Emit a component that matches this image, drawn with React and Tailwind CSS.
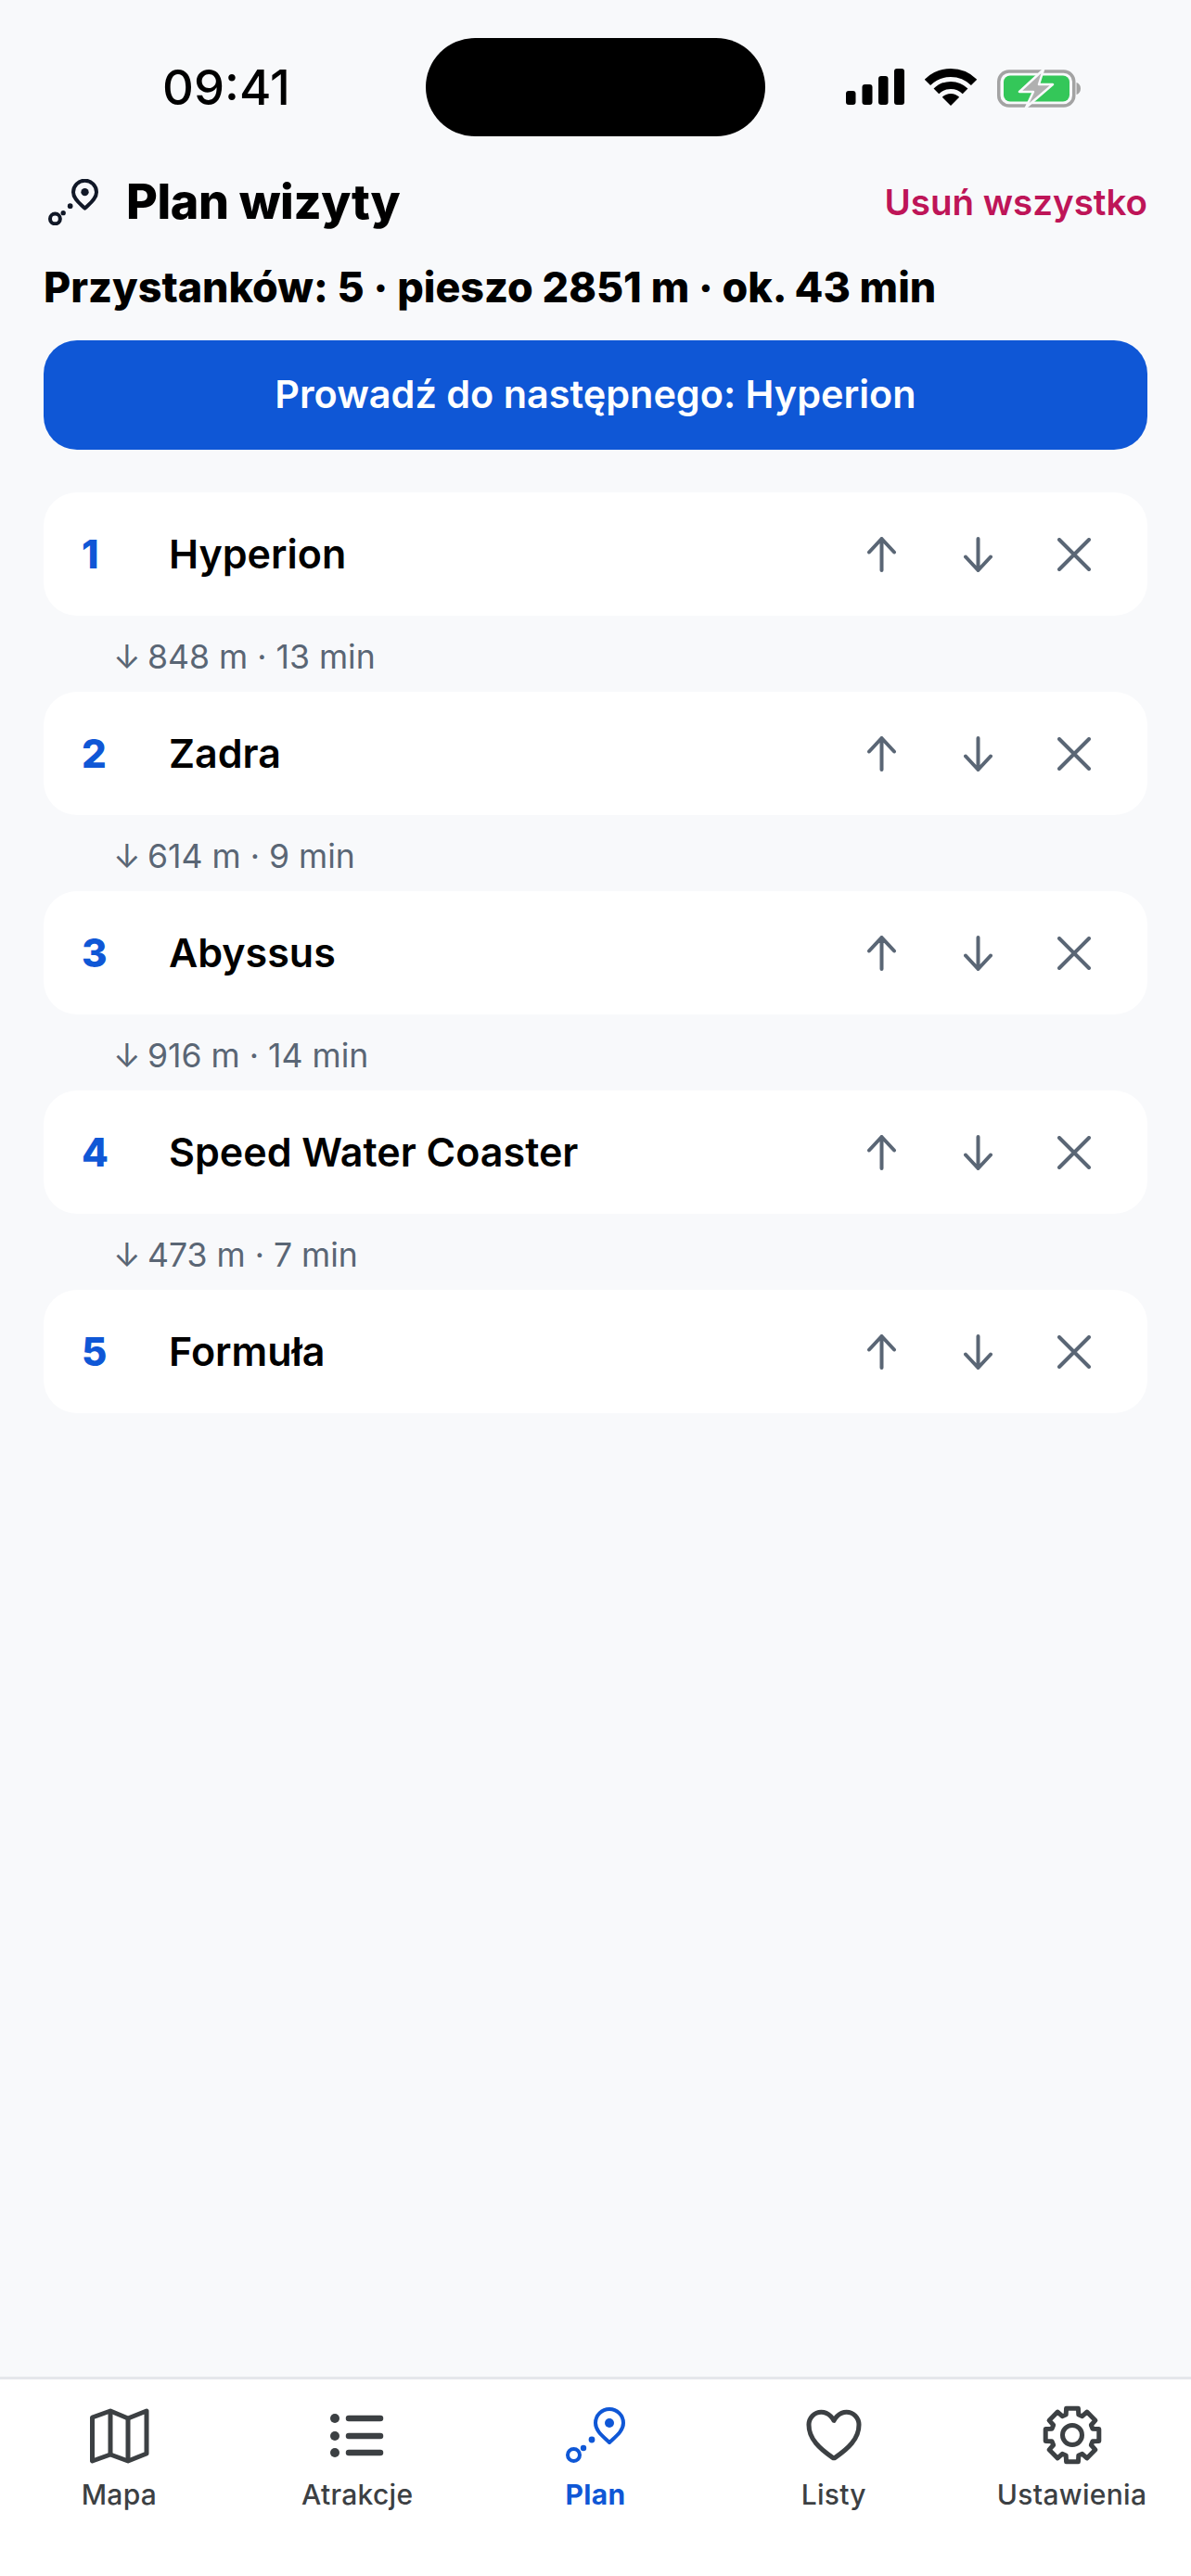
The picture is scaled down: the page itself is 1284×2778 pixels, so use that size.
import React from "react";

const font = { fontFamily: "Inter, sans-serif" };

function PlanIcon({ className, sw = 4 }) {
  return (
    <svg viewBox="0 0 64 60" className={className} fill="none" stroke="currentColor">
      <circle cx="8.5" cy="51.5" r="6.5" strokeWidth={sw} />
      <circle cx="19" cy="44" r="3.2" fill="currentColor" stroke="none" />
      <circle cx="28" cy="35" r="3.4" fill="currentColor" stroke="none" />
      <path d="M47 38C41 32 32 26 32 17A15 15 0 0 1 62 17C62 26 53 32 47 38Z" strokeWidth={sw} strokeLinejoin="round" />
      <circle cx="47" cy="17" r="5" fill="currentColor" stroke="none" />
    </svg>
  );
}

function MapIcon() {
  return (
    <svg viewBox="0 0 72 72" className="w-[72px] h-[72px]" fill="none" stroke="currentColor" strokeWidth="5" strokeLinejoin="round">
      <path d="M7.5 17L27 10L46 18L66 10V56L46 64L27 57L7.5 64Z" />
      <path d="M27 10V57M46 18V64" />
    </svg>
  );
}

function ListIcon() {
  return (
    <svg viewBox="0 0 72 72" className="w-[72px] h-[72px]" fill="currentColor" stroke="none">
      <circle cx="12" cy="18" r="5" />
      <circle cx="12" cy="37" r="5" />
      <circle cx="12" cy="55" r="5" />
      <path d="M27 18H61M27 37H61M27 55H61" fill="none" stroke="currentColor" strokeWidth="6.5" strokeLinecap="round" />
    </svg>
  );
}

function HeartIcon() {
  return (
    <svg viewBox="0 0 512 512" className="w-[72px] h-[72px]" fill="none" stroke="currentColor" strokeWidth="36" strokeLinejoin="round">
      <path d="M352.92 80C288 80 256 144 256 144s-32-64-96.92-64c-52.76 0-94.54 44.14-95.08 96.81-1.1 109.33 86.73 187.08 183 252.42a16 16 0 0018 0c96.26-65.34 184.09-143.09 183-252.42-.54-52.67-42.32-96.81-95.08-96.81z" />
    </svg>
  );
}

const gearPath = (() => {
  const pts = [];
  for (let k = 0; k < 8; k++) {
    const a = -Math.PI / 2 + (k * Math.PI) / 4;
    const add = (r, d) => pts.push(`${(r * Math.cos(a + d)).toFixed(2)} ${(r * Math.sin(a + d)).toFixed(2)}`);
    add(23, -0.3);
    add(29.5, -0.22);
    add(29.5, 0.22);
    add(23, 0.3);
  }
  return "M" + pts.join("L") + "Z";
})();

function GearIcon() {
  return (
    <svg viewBox="-36 -36 72 72" className="w-[72px] h-[72px]" fill="none" stroke="currentColor" strokeWidth="5" strokeLinejoin="round">
      <path d={gearPath} />
      <circle cx="0" cy="0" r="10.5" />
    </svg>
  );
}

function Signal() {
  return (
    <svg viewBox="0 0 63 39" className="w-[63px] h-[39px]" fill="black">
      <rect x="0" y="24" width="10.5" height="15" rx="3" />
      <rect x="17.5" y="17" width="11" height="22" rx="3" />
      <rect x="35" y="8" width="10.5" height="31" rx="3" />
      <rect x="52" y="0" width="11" height="39" rx="3" />
    </svg>
  );
}

function Wifi() {
  return (
    <svg viewBox="0 0 56 40" className="w-[56px] h-[40px]" fill="none" stroke="black">
      <path d="M2.9 14.9A35.5 35.5 0 0 1 53.1 14.9" strokeWidth="9" />
      <path d="M12.4 24.4A22 22 0 0 1 43.6 24.4" strokeWidth="8" />
      <path d="M28 40L18.8 30.8A13 13 0 0 1 37.2 30.8Z" fill="black" stroke="none" />
    </svg>
  );
}

function Battery() {
  return (
    <svg viewBox="0 0 90 43" className="w-[90px] h-[43px]">
      <rect x="1.75" y="3" width="81" height="37" rx="11" fill="none" stroke="#a3a3a3" strokeWidth="3.5" />
      <rect x="7" y="7.5" width="71" height="28" rx="7" fill="#34c759" />
      <path d="M85.5 15C88 15.6 90 18 90 21.5C90 25 88 27.4 85.5 28Z" fill="#a3a3a3" />
      <path d="M50 1L24 25H39L31 42L60 17H45Z" fill="#b0b0b0" stroke="#f8f9fb" strokeWidth="2.5" strokeLinejoin="round" />
    </svg>
  );
}

function ArrowUp() {
  return (
    <svg viewBox="0 0 31 38" className="w-[31px] h-[38px]" fill="none" stroke="#5a6675" strokeWidth="4" strokeLinecap="round" strokeLinejoin="round">
      <path d="M15.5 2V36M2 16.5L15.5 2L29 16.5" />
    </svg>
  );
}

function ArrowDown() {
  return (
    <svg viewBox="0 0 31 38" className="w-[31px] h-[38px]" fill="none" stroke="#5a6675" strokeWidth="4" strokeLinecap="round" strokeLinejoin="round">
      <path d="M15.5 2V36M2 21.5L15.5 36L29 21.5" />
    </svg>
  );
}

function Close() {
  return (
    <svg viewBox="0 0 36 36" className="w-[36px] h-[36px]" fill="none" stroke="#5a6675" strokeWidth="4" strokeLinecap="round">
      <path d="M2 2L34 34M34 2L2 34" />
    </svg>
  );
}

const stops = [
  { n: 1, name: "Hyperion", leg: "848 m · 13 min" },
  { n: 2, name: "Zadra", leg: "614 m · 9 min" },
  { n: 3, name: "Abyssus", leg: "916 m · 14 min" },
  { n: 4, name: "Speed Water Coaster", leg: "473 m · 7 min" },
  { n: 5, name: "Formuła" },
];

const tabs = [
  { label: "Mapa", icon: <MapIcon /> },
  { label: "Atrakcje", icon: <ListIcon /> },
  { label: "Plan", active: true, icon: <PlanIcon className="w-[64px] h-[60px]" /> },
  { label: "Listy", icon: <HeartIcon /> },
  { label: "Ustawienia", icon: <GearIcon /> },
];

export default function App() {
  return (
    <div style={font} className="w-[1284px] h-[2778px] bg-[#f8f9fb] flex flex-col text-black overflow-hidden">
      <div className="h-[188px] shrink-0 flex items-start pt-[41px] pl-[175px]">
        <div className="w-[284px] h-[106px] flex items-center text-[52.5px] font-medium leading-none">09:41</div>
        <div className="w-[366px] h-[106px] rounded-[53px] bg-black" />
        <div className="flex items-start mt-[33px] ml-[87px]">
          <Signal />
          <div className="ml-[22px]"><Wifi /></div>
          <div className="ml-[22px]"><Battery /></div>
        </div>
      </div>

      <div className="flex-1 px-[47px]">
        <div className="flex items-center justify-between h-[60px]">
          <div className="flex items-center">
            <PlanIcon sw={4.8} className="ml-[5px] w-[54px] h-[50px] text-[#111827]" />
            <h1 className="ml-[30px] text-[52px] font-extrabold leading-none tracking-[-0.4px]">Plan wizyty</h1>
          </div>
          <button className="text-[38.5px] font-semibold text-[#be1558] leading-none">Usuń wszystko</button>
        </div>
        <p className="mt-[37px] text-[44.8px] font-extrabold leading-[50px]">Przystanków: 5 · pieszo 2851 m · ok. 43 min</p>
        <button className="mt-[32px] w-full h-[118px] rounded-[36px] bg-[#0f57d6] text-white text-[41.4px] font-semibold flex items-center justify-center pb-[2px]">
          Prowadź do następnego: Hyperion
        </button>

        <ul className="mt-[46px] flex flex-col">
          {stops.map((s) => (
            <li key={s.n} className="flex flex-col">
              <div className="h-[133px] rounded-[36px] bg-white flex items-center pl-[41px]">
                <span className="w-[94px] text-[42px] font-extrabold text-[#0f57d6]">{s.n}</span>
                <span className="flex-1 text-[43px] font-semibold">{s.name}</span>
                <div className="flex items-center">
                  <div className="w-[104px] flex justify-center"><ArrowUp /></div>
                  <div className="w-[104px] flex justify-center"><ArrowDown /></div>
                  <div className="w-[104px] flex justify-center"><Close /></div>
                </div>
                <div className="w-[27px]" />
              </div>
              {s.leg && (
                <div className="h-[82px] pl-[75px] pt-[7px] flex items-center text-[35.6px] text-[#5a6675] leading-none">
                  <span className="w-[37px]">↓</span>
                  <span>{s.leg}</span>
                </div>
              )}
            </li>
          ))}
        </ul>
      </div>

      <nav className="h-[215px] shrink-0 bg-white border-t-[3px] border-[#e5e7eb] grid grid-cols-5">
        {tabs.map((t) => (
          <div key={t.label} className={`flex flex-col items-center ${t.active ? "text-[#0f57d6]" : "text-[#3c4043]"}`}>
            <div className="mt-[24px] h-[72px] flex items-center justify-center">{t.icon}</div>
            <span className={`mt-[10px] text-[30px] leading-[36px] tracking-[0.3px] ${t.active ? "font-bold" : "font-medium"}`}>{t.label}</span>
          </div>
        ))}
      </nav>
    </div>
  );
}
